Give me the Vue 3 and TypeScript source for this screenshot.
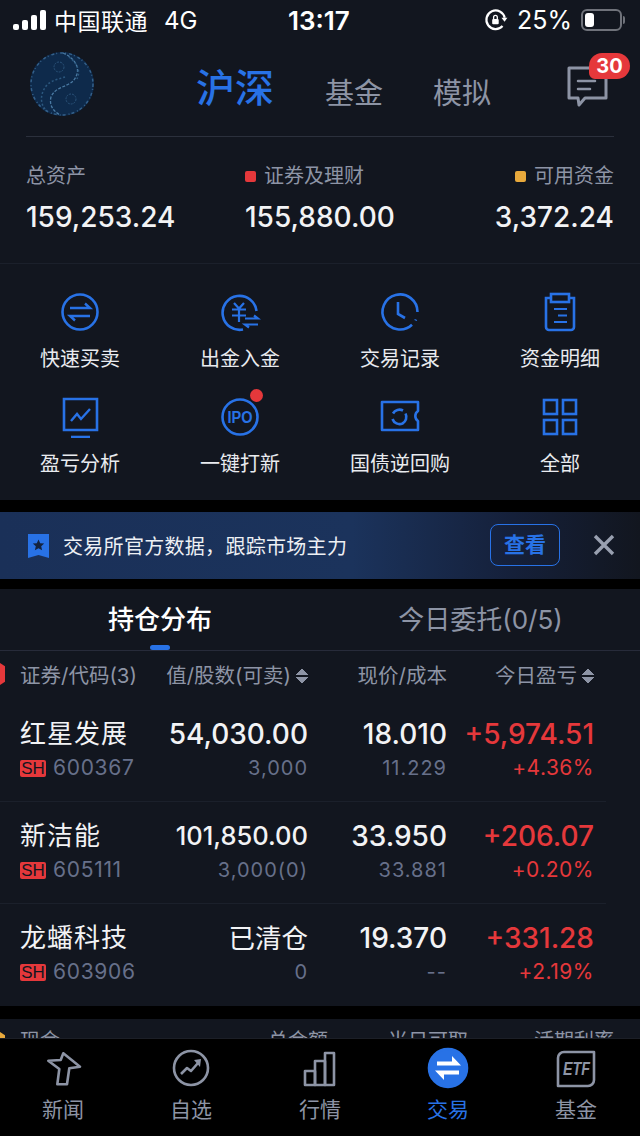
<template>
  <div class="page">
    <section class="top">
      <!-- status bar -->
      <div class="status">
        <div class="status-left">
          <div class="signal"><i v-for="h in [6, 10, 15, 20]" :key="h" :style="{ height: h + 'px' }"></i></div>
          <span class="carrier">中国联通</span>
          <span class="net">4G</span>
        </div>
        <span class="clock">13:17</span>
        <div class="status-right">
          <svg width="24" height="24" viewBox="0 0 22 22" fill="none" stroke="#fff" stroke-width="2">
            <path d="M17 16.500A8.500 8.500 0 1 1 19 9" />
            <path d="M16 9h5.500l-2.700 3.500z" fill="#fff" stroke="none" />
            <rect x="7.500" y="10" width="6" height="5" rx="1" fill="#fff" stroke="none" />
            <path d="M8.800 10V8.500a1.700 1.700 0 0 1 3.400 0V10" stroke-width="1.200" />
          </svg>
          <span class="pct">25%</span>
          <div class="battery"><b></b></div>
          <div class="battery-cap"></div>
        </div>
      </div>

      <!-- market tabs -->
      <div class="head">
        <svg class="avatar" width="66" height="66" viewBox="0 0 66 66">
          <circle cx="33" cy="33" r="32" fill="#0e2a4b" />
          <circle cx="33" cy="33" r="31" fill="none" stroke="#34608a" stroke-width="1.500" stroke-dasharray="3 2 1 3" />
          <path d="M34 2c14 6 19 18 10 28-6 6-18 6-22 16-2 8 2 14 9 18" fill="none" stroke="#4a7aa3" stroke-width="1.300" stroke-dasharray="3 1.500" />
          <path d="M40 6c8 6 12 14 8 22M16 58c-5-6-5-16 2-24 5-5 12-6 18-8" fill="none" stroke="#2c587f" stroke-width="1.500" stroke-dasharray="2 2" />
          <circle cx="30" cy="16" r="5" fill="none" stroke="#2a5279" stroke-dasharray="2 1" />
          <circle cx="42" cy="48" r="5" fill="none" stroke="#2a5279" stroke-dasharray="2 1" />
        </svg>
        <nav class="markets">
          <span class="market active">沪深</span>
          <span class="market">基金</span>
          <span class="market">模拟</span>
        </nav>
        <div class="msg">
          <svg width="42" height="44" viewBox="0 0 42 44" fill="none" stroke="#8d94a5" stroke-width="3" stroke-linejoin="round" stroke-linecap="round">
            <path d="M2 4h37v30H18l-6 7-1-7H2z" />
            <path d="M11 17h17M11 25h12" stroke-width="2.500" />
          </svg>
          <span class="badge">30</span>
        </div>
      </div>

      <!-- assets -->
      <div class="assets">
        <div class="asset" v-for="a in assets" :key="a.label" :class="a.align">
          <div class="asset-label"><i v-if="a.dot" :style="{ background: a.dot }"></i>{{ a.label }}</div>
          <div class="asset-value">{{ a.value }}</div>
        </div>
      </div>
    </section>

    <!-- shortcuts -->
    <section class="shortcuts">
      <div class="shortcut" v-for="s in shortcuts" :key="s.label">
        <div class="shortcut-icon">
          <svg width="42" height="42" viewBox="0 0 42 42" fill="none" stroke="#2872e6" stroke-width="2.600" v-html="s.icon"></svg>
          <i v-if="s.dot" class="red-dot"></i>
        </div>
        <span>{{ s.label }}</span>
      </div>
    </section>

    <!-- promo banner -->
    <section class="banner">
      <svg width="23" height="24" viewBox="0 0 23 24">
        <path d="M1 0h21v24l-10.500-3L1 24z" fill="#2872e6" />
        <path d="M11.500 5.500l1.700 3.700 4 .4-3 2.700.9 4-3.600-2.100-3.600 2.100.9-4-3-2.700 4-.4z" fill="#14233f" />
      </svg>
      <span class="banner-text">交易所官方数据，跟踪市场主力</span>
      <button class="banner-btn">查看</button>
      <svg class="banner-close" width="24" height="24" viewBox="0 0 24 24" stroke="#99a0b0" stroke-width="3.400" fill="none">
        <path d="M3 3l18 18M21 3L3 21" />
      </svg>
    </section>

    <!-- positions -->
    <section class="positions">
      <div class="tabs">
        <div class="tab active">持仓分布<i></i></div>
        <div class="tab">今日委托(0/5)</div>
      </div>
      <div class="table-head">
        <i class="hex"></i>
        <div class="c-name">证券/代码(3)</div>
        <div class="c-value">值/股数(可卖)<span class="sort"></span></div>
        <div class="c-price">现价/成本</div>
        <div class="c-pnl">今日盈亏<span class="sort"></span></div>
      </div>
      <div class="row" v-for="r in rows" :key="r.code">
        <div class="c-name">
          <div class="big">{{ r.name }}</div>
          <div class="small code"><em>SH</em>{{ r.code }}</div>
        </div>
        <div class="c-value">
          <div class="big" :class="r.valueClass">{{ r.value }}</div>
          <div class="small">{{ r.shares }}</div>
        </div>
        <div class="c-price">
          <div class="big">{{ r.price }}</div>
          <div class="small">{{ r.cost }}</div>
        </div>
        <div class="c-pnl">
          <div class="big up">{{ r.pnl }}</div>
          <div class="small up">{{ r.rate }}</div>
        </div>
      </div>
    </section>

    <!-- cash section, cut off by tab bar -->
    <section class="cash">
      <i class="hex cash-hex"></i>
      <span class="cash-name">现金</span>
      <span class="cash-a">总金额</span>
      <span class="cash-b">当日可取</span>
      <span class="cash-c">活期利率</span>
    </section>

    <!-- tab bar -->
    <footer class="tabbar">
      <div class="tabitem" v-for="t in tabs" :key="t.label" :class="{ on: t.on }">
        <svg width="44" height="44" viewBox="0 0 44 44" fill="none" stroke="#8d94a5" stroke-width="2.600" stroke-linejoin="round" v-html="t.icon"></svg>
        <span>{{ t.label }}</span>
      </div>
    </footer>
  </div>
</template>

<script setup lang="ts">
const assets = [
  { label: '总资产', value: '159,253.24', align: 'left', dot: '' },
  { label: '证券及理财', value: '155,880.00', align: 'mid', dot: '#e5383b' },
  { label: '可用资金', value: '3,372.24', align: 'right', dot: '#e8a93c' },
]

const shortcuts = [
  {
    label: '快速买卖',
    icon: '<circle cx="21" cy="21" r="17.500"/><path d="M11 17h20l-5-4.500M31 25H11l5 4.500" stroke-width="2.400"/>',
  },
  {
    label: '出金入金',
    icon: '<path d="M37.500 20A17 17 0 1 0 24 38.500"/><path d="M15 12l5 5.500 5-5.500M13 18.500h14M13 24.500h14M20 17.500V31" stroke-width="2.200"/><path d="M26 27.500h13l-4-3M39 33.500H26l4 3" stroke-width="2.200"/>',
  },
  {
    label: '交易记录',
    icon: '<path d="M38.500 21A17.500 17.500 0 1 0 33 33.700"/><path d="M19 11v12l7 4" /><path d="M36.500 29.500l.5-1" />',
  },
  {
    label: '资金明细',
    icon: '<path d="M12 7H7v29a3 3 0 0 0 3 3h22a3 3 0 0 0 3-3V7h-5"/><rect x="12" y="3" width="18" height="8"/><path d="M15 18h13M15 31h13M19 24.500h9" stroke-width="2.200"/>',
  },
  {
    label: '盈亏分析',
    icon: '<path d="M5 3h33v31H5z"/><path d="M12 41h19"/><path d="M12 25l6-7 4 5 9-10" stroke-width="2.400"/>',
  },
  {
    label: '一键打新',
    dot: true,
    icon: '<circle cx="21" cy="21" r="17.500"/><text x="21" y="27" text-anchor="middle" font-family="Liberation Sans, sans-serif" font-size="16" font-weight="700" fill="#2872e6" stroke="none" textLength="25" lengthAdjust="spacingAndGlyphs">IPO</text>',
  },
  {
    label: '国债逆回购',
    icon: '<path d="M3 6h36v9a6 6 0 0 0 0 10v9H3z" stroke-linejoin="round"/><path d="M24 14.500a7.500 7.500 0 0 0-10 3M13.500 23a7.500 7.500 0 0 0 10 4.500 7.500 7.500 0 0 0 3-10" />',
  },
  {
    label: '全部',
    icon: '<rect x="5" y="4" width="13" height="14"/><rect x="24" y="4" width="13" height="14"/><rect x="5" y="24" width="13" height="14"/><rect x="24" y="24" width="13" height="14"/>',
  },
]

const rows = [
  { name: '红星发展', code: '600367', value: '54,030.00', valueClass: '', shares: '3,000', price: '18.010', cost: '11.229', pnl: '+5,974.51', rate: '+4.36%' },
  { name: '新洁能', code: '605111', value: '101,850.00', valueClass: 'tight', shares: '3,000(0)', price: '33.950', cost: '33.881', pnl: '+206.07', rate: '+0.20%' },
  { name: '龙蟠科技', code: '603906', value: '已清仓', valueClass: 'cn', shares: '0', price: '19.370', cost: '--', pnl: '+331.28', rate: '+2.19%' },
]

const tabs = [
  { label: '新闻', on: false, icon: '<path d="M22.300 7.300L39 20.700l-10.700 1.600-2.300 16h-9.700l2-15.300-11-8.300 12.400-.7z"/>' },
  { label: '自选', on: false, icon: '<circle cx="22" cy="22" r="17"/><path d="M12 28l6-6 4 3 7-8" /><path d="M25 14l7-1-1 8z" fill="#8d94a5" stroke="none"/>' },
  { label: '行情', on: false, icon: '<rect x="7" y="25" width="10" height="14"/><rect x="17" y="15" width="10" height="24"/><rect x="27" y="7" width="9" height="32"/>' },
  { label: '交易', on: true, icon: '<circle cx="22" cy="22" r="19" fill="#2872e6" stroke="#2872e6"/><path d="M11 15.500h15V10l9 9.500H11zM33 28.500H18V34l-9-9.500h24z" fill="#fff" stroke="none"/>' },
  { label: '基金', on: false, icon: '<path d="M10 6h30v28a6 6 0 0 1-6 6H4V12a6 6 0 0 1 6-6z"/><text x="9" y="29" font-family="Liberation Sans, sans-serif" font-size="18" font-style="italic" font-weight="700" fill="#8d94a5" stroke="none" textLength="27" lengthAdjust="spacingAndGlyphs">ETF</text>' },
]
</script>

<style>
html,
body {
  margin: 0;
  background: #000;
}
</style>

<style scoped>
.page {
  width: 640px;
  height: 1136px;
  overflow: hidden;
  position: relative;
  background: #000;
  color: #fff;
  font-family: Inter, "Noto Sans CJK SC", sans-serif;
}

i {
  font-style: normal;
}

.top {
  background: #12161f;
}

.status {
  height: 44px;
  display: flex;
  align-items: center;
  justify-content: space-between;
  padding: 0 15px 4px 13px;
  box-sizing: border-box;
  position: relative;
}

.status-left {
  display: flex;
  align-items: center;
}

.signal {
  display: flex;
  align-items: flex-end;
  gap: 3px;
  height: 20px;
  margin-right: 8px;
}

.signal i {
  width: 6px;
  border-radius: 2px;
  background: #fff;
}

.carrier {
  font-size: 23px;
  letter-spacing: 0.500px;
}

.net {
  font-size: 24px;
  margin-left: 16px;
}

.clock {
  position: absolute;
  left: 288px;
  top: 6px;
  font-size: 26px;
  font-weight: 600;
  line-height: 30px;
}

.status-right {
  display: flex;
  align-items: center;
}

.pct {
  font-size: 25px;
  margin: 0 9px 0 9px;
}

.battery {
  width: 41px;
  height: 22px;
  border: 2px solid #6f727a;
  border-radius: 6px;
  box-sizing: border-box;
  padding: 2px;
}

.battery b {
  display: block;
  width: 9px;
  height: 14px;
  background: #fff;
  border-radius: 3px;
}

.battery-cap {
  width: 2px;
  height: 8px;
  background: #6f727a;
  margin-left: 1px;
  border-radius: 0 2px 2px 0;
}

.head {
  margin: 0 26px;
  height: 92px;
  border-bottom: 1px solid #2b303c;
  display: flex;
  position: relative;
  box-sizing: content-box;
}

.avatar {
  margin: 7px 0 0 3px;
}

.markets {
  display: flex;
  align-items: baseline;
  margin-left: 101px;
  padding-top: 19px;
  height: 50px;
}

.market {
  font-size: 29px;
  line-height: 50px;
  color: #8d94a5;
  margin-right: 50px;
  position: relative;
  top: 2px;
}

.market.active {
  font-size: 39px;
  font-weight: 500;
  color: #2872e6;
  margin-right: 51px;
  top: 0;
}

.msg {
  position: absolute;
  right: -3px;
  top: 20px;
  width: 50px;
}

.badge {
  position: absolute;
  left: 22px;
  top: -11px;
  width: 41px;
  height: 26px;
  border-radius: 13px 13px 13px 6px;
  background: #e5383b;
  font-size: 20px;
  font-weight: 700;
  line-height: 26px;
  text-align: center;
}

.assets {
  display: grid;
  grid-template-columns: 219px 1fr auto;
  padding: 25px 26px 0;
  height: 127px;
  box-sizing: border-box;
  border-bottom: 1px solid #1b202b;
}

.asset.right {
  text-align: right;
}

.asset-label {
  font-size: 20px;
  line-height: 28px;
  color: #8d94a5;
  display: flex;
  align-items: center;
}

.asset.right .asset-label {
  justify-content: flex-end;
}

.asset-label i {
  width: 11px;
  height: 11px;
  border-radius: 2px;
  margin-right: 8px;
}

.asset-value {
  font-size: 28px;
  font-weight: 500;
  line-height: 34px;
  margin-top: 10px;
  color: #f2f3f5;
}

.shortcuts {
  background: #12161f;
  height: 236px;
  display: grid;
  grid-template-columns: repeat(4, 160px);
  grid-template-rows: 105px 105px;
  padding-top: 27px;
  box-sizing: border-box;
}

.shortcut {
  display: flex;
  flex-direction: column;
  align-items: center;
  font-size: 20px;
  color: #e9ebef;
  line-height: 28px;
}

.shortcut-icon {
  height: 42px;
  width: 42px;
  margin-bottom: 12px;
  position: relative;
}

.red-dot {
  position: absolute;
  right: -2px;
  top: -7px;
  width: 13px;
  height: 13px;
  background: #e5383b;
  border-radius: 50%;
}

.banner {
  height: 67px;
  margin-top: 12px;
  background: linear-gradient(90deg, #1a3058 0%, #1b335c 55%, #15203a 80%, #12161f 100%);
  display: flex;
  align-items: center;
  padding-left: 27px;
}

.banner-text {
  font-size: 20px;
  color: #edf0f4;
  margin-left: 13px;
  width: 427px;
  letter-spacing: 0.300px;
  white-space: nowrap;
}

.banner-btn {
  width: 70px;
  height: 42px;
  border: 1px solid #2872e6;
  border-radius: 8px;
  background: transparent;
  color: #2872e6;
  font: 700 21px/1 "Noto Sans CJK SC", sans-serif;
  padding: 0 0 2px;
  margin-bottom: 2px;
}

.banner-close {
  margin: 0 0 2px 32px;
}

.positions {
  margin-top: 10px;
  background: #12161f;
  height: 417px;
}

.tabs {
  height: 62px;
  display: grid;
  grid-template-columns: 320px 320px;
  border-bottom: 1px solid #272b3a;
  box-sizing: border-box;
}

.tab {
  text-align: center;
  font-size: 26px;
  line-height: 62px;
  color: #8d94a5;
  position: relative;
}

.tab:last-child {
  padding-left: 1px;
}

.tab.active {
  color: #fff;
  font-weight: 500;
}

.tab.active i {
  position: absolute;
  left: 150px;
  bottom: 1px;
  width: 20px;
  height: 5px;
  border-radius: 3px;
  background: #2872e6;
}

.table-head,
.row {
  display: grid;
  grid-template-columns: 140px 148px 139px 147px;
  padding-left: 20px;
  column-gap: 0;
}

.table-head {
  height: 49px;
  align-items: center;
  font-size: 20.500px;
  color: #8d94a5;
  position: relative;
  white-space: nowrap;
  padding-bottom: 3px;
  box-sizing: border-box;
}

.hex {
  position: absolute;
  left: -7px;
  top: 10px;
  width: 12px;
  height: 26px;
  background: #e5383b;
  clip-path: polygon(30% 0, 100% 20%, 100% 80%, 30% 100%, 0 80%, 0 20%);
}

.table-head .c-value,
.table-head .c-price,
.table-head .c-pnl {
  text-align: right;
}

.sort {
  display: inline-block;
  width: 12px;
  height: 16px;
  margin-left: 5px;
  vertical-align: -1px;
  background:
    linear-gradient(to top left, #8d94a5 50%, transparent 50%) left top / 6px 7px no-repeat,
    linear-gradient(to top right, #8d94a5 50%, transparent 50%) right top / 6px 7px no-repeat,
    linear-gradient(to bottom left, #8d94a5 50%, transparent 50%) left bottom / 6px 7px no-repeat,
    linear-gradient(to bottom right, #8d94a5 50%, transparent 50%) right bottom / 6px 7px no-repeat;
}

.row {
  height: 102px;
  box-sizing: border-box;
  padding-top: 15px;
  margin-right: 34px;
  border-bottom: 1px solid #1b202b;
}

.row:last-child {
  border-bottom: 0;
}

.row > div:not(.c-name) {
  text-align: right;
}

.big {
  font-size: 28px;
  font-weight: 500;
  line-height: 38px;
  color: #f2f3f5;
  white-space: nowrap;
}

.c-name .big {
  font-size: 26px;
  font-weight: 400;
  letter-spacing: 1px;
}

.big.tight {
  font-size: 25.500px;
}

.big.cn {
  font-size: 26.500px;
  font-weight: 400;
}

.small {
  font-size: 20px;
  line-height: 28px;
  margin-top: 1px;
  color: #67708a;
  letter-spacing: 1px;
}

.code {
  font-size: 21px;
  display: flex;
  align-items: center;
  letter-spacing: 0.700px;
}

.code em {
  font: 400 17px "Liberation Sans", sans-serif;
  letter-spacing: 0;
  width: 26px;
  height: 17px;
  line-height: 17px;
  background: #e5383b;
  border-radius: 2px;
  color: #12161f;
  text-align: center;
  margin-right: 7px;
}

.big.up,
.small.up {
  color: #e5383b;
}

.small.up {
  font-size: 21px;
  letter-spacing: 0.500px;
}

.cash {
  margin-top: 13px;
  height: 19px;
  background: #12161f;
  position: relative;
  overflow: hidden;
  font-size: 20px;
  color: #8d94a5;
}

.cash span {
  position: absolute;
  top: 8px;
  line-height: 28px;
}

.cash-hex {
  background: #e8a93c;
  top: 11px;
}

.cash-name {
  left: 20px;
}

.cash-a {
  left: 268px;
}

.cash-b {
  left: 388px;
}

.cash-c {
  left: 534px;
}

.tabbar {
  height: 98px;
  background: #000;
  display: grid;
  grid-template-columns: 126px 130px 128px 128px 128px;
  border-top: 1px solid #1c1f27;
  box-sizing: border-box;
}

.tabitem {
  display: flex;
  flex-direction: column;
  align-items: center;
  padding-top: 7px;
  font-size: 21px;
  color: #8d94a5;
  line-height: 28px;
}

.tabitem span {
  margin-top: 6px;
}

.tabitem.on {
  color: #2872e6;
}
</style>
